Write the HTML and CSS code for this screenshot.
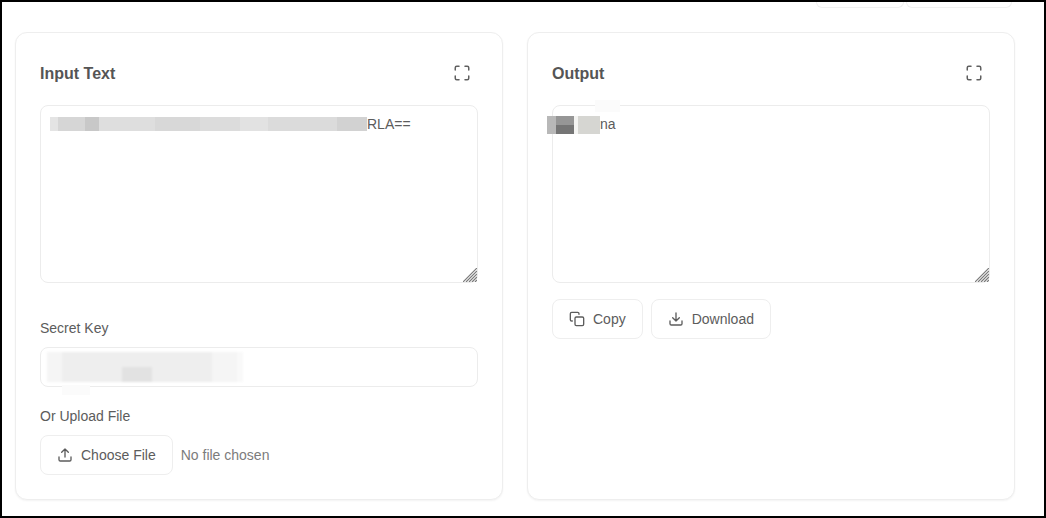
FILE: index.html
```html
<!DOCTYPE html>
<html>
<head>
<title>Decrypt Text</title>
<link rel="stylesheet" href="styles.css">
</head>
<body>
<div class="frame">
<div class="toolbar">
<div class="tool-btn tool-a"></div>
<div class="tool-btn tool-b"></div>
</div>
<div class="content">
<div class="card">
<div class="card-head">
<h3>Input Text</h3>
<svg class="icon-max" viewBox="0 0 24 24"><path d="M8 3H5a2 2 0 0 0-2 2v3M21 8V5a2 2 0 0 0-2-2h-3M3 16v3a2 2 0 0 0 2 2h3M16 21h3a2 2 0 0 0 2-2v-3"/></svg>
</div>
<div class="text-wrap">
<textarea class="text-box indent-input" spellcheck="false">RLA==</textarea>
<div class="redact redact-input"></div>
<svg class="grip" viewBox="0 0 14 14"><path d="M0 14 14 0M3 14 14 3M6 14 14 6M9 14 14 9M12 14 14 12"/></svg>
</div>
<label class="field-label label-key">Secret Key</label>
<div class="key-wrap">
<input type="text" class="key-input">
<div class="redact redact-key"></div>
<div class="smudge smudge-key"></div>
</div>
<label class="field-label label-file">Or Upload File</label>
<div class="file-row">
<button class="btn">
<svg class="icon" viewBox="0 0 24 24"><path d="M21 15v4a2 2 0 0 1-2 2H5a2 2 0 0 1-2-2v-4M17 8l-5-5-5 5M12 3v12"/></svg>
Choose File
</button>
<span class="file-name">No file chosen</span>
</div>
</div>
<div class="card">
<div class="card-head">
<h3>Output</h3>
<svg class="icon-max" viewBox="0 0 24 24"><path d="M8 3H5a2 2 0 0 0-2 2v3M21 8V5a2 2 0 0 0-2-2h-3M3 16v3a2 2 0 0 0 2 2h3M16 21h3a2 2 0 0 0 2-2v-3"/></svg>
</div>
<div class="text-wrap">
<textarea class="text-box indent-output" spellcheck="false">na</textarea>
<div class="smudge smudge-output"></div>
<div class="redact redact-output"></div>
<svg class="grip" viewBox="0 0 14 14"><path d="M0 14 14 0M3 14 14 3M6 14 14 6M9 14 14 9M12 14 14 12"/></svg>
</div>
<div class="actions">
<button class="btn">
<svg class="icon" viewBox="0 0 24 24"><rect x="9" y="9" width="13" height="13" rx="2"/><path d="M5 15H4a2 2 0 0 1-2-2V4a2 2 0 0 1 2-2h9a2 2 0 0 1 2 2v1"/></svg>
Copy
</button>
<button class="btn">
<svg class="icon" viewBox="0 0 24 24"><path d="M21 15v4a2 2 0 0 1-2 2H5a2 2 0 0 1-2-2v-4M7 10l5 5 5-5M12 15V3"/></svg>
Download
</button>
</div>
</div>
</div>
</div>
</body>
</html>
```

FILE: styles.css
```css
html,body{margin:0;height:100%;overflow:hidden;background:#fff}
body{font-family:"Liberation Sans",Arial,sans-serif;color:#5c5c5c;font-size:14px}
.frame{box-sizing:border-box;height:518px;border:2px solid #000;padding:0 29px 0 13px;overflow:hidden}
.toolbar{display:flex;justify-content:flex-end;gap:2px;height:6px;margin-bottom:24px;padding-right:3px}
.tool-btn{box-sizing:border-box;height:6px;border:1px solid #f0f0f0;border-top:none;border-radius:0 0 6px 6px}
.tool-a{width:88px}
.tool-b{width:106px}
.content{display:grid;grid-template-columns:488px 488px;gap:24px}
.card{box-sizing:border-box;height:468px;padding:24px;border:1px solid #eeeeee;border-radius:12px;background:#fff;box-shadow:0 1px 2px rgba(0,0,0,.05)}
.card-head{display:flex;justify-content:space-between;align-items:center;height:32px;margin-bottom:16px;padding-right:7px}
.card-head h3{margin:2px 0 0;font-size:16px;line-height:24px;font-weight:bold;color:#555}
.icon-max{width:18px;height:18px;fill:none;stroke:#606060;stroke-width:2;stroke-linecap:round;stroke-linejoin:round}
.text-wrap{position:relative;height:178px}
.text-box{display:block;box-sizing:border-box;width:100%;height:178px;padding:8px 10px;border:1px solid #ececec;border-radius:8px;resize:none;outline:none;font-family:inherit;font-size:14px;line-height:20px;color:#5c5c5c;background:#fff}
.indent-input{text-indent:316px}
.indent-output{text-indent:37px}
.grip{position:absolute;right:1px;bottom:1px;width:14px;height:14px;fill:none;stroke:#7a7a7a;stroke-width:1.2}
.redact{position:absolute;pointer-events:none}
.redact-input{left:10px;top:12px;width:317px;height:14px;filter:blur(.5px);background:
linear-gradient(90deg,#e4e4e4 0 8px,#d6d6d6 8px 35px,#c8c8c8 35px 49px,#dedede 49px 105px,#d8d8d8 105px 150px,#dcdcdc 150px 190px,#e2e2e2 190px 218px,#dbdbdb 218px 287px,#d2d2d2 287px 317px)}
.redact-output{left:-5px;top:11px;width:53px;height:18px;background:
linear-gradient(#969696 0 9px,#757575 9px 18px) 9px 0/18px 18px no-repeat,
linear-gradient(90deg,#b8b8b8 0 27px,#f4f4f2 27px 31px,#d6d6d2 31px 53px)}
.smudge{position:absolute;background:#fbfbfb}
.smudge-output{left:43px;top:-5px;width:25px;height:12px}
.field-label{display:block;line-height:20px;margin-bottom:9px;color:#5c5c5c}
.label-key{margin-top:35px}
.label-file{margin-top:19px}
.key-wrap{position:relative;height:40px}
.key-input{display:block;box-sizing:border-box;width:100%;height:40px;padding:0 10px;border:1px solid #ececec;border-radius:8px;outline:none;background:#fff}
.redact-key{left:7px;top:5px;width:196px;height:30px;filter:blur(.8px);background:
linear-gradient(#e2e2e2,#e2e2e2) 75px 15px/30px 15px no-repeat,
linear-gradient(90deg,#f5f5f5 0 15px,#eeeeee 15px 165px,#f5f5f5 165px 190px,#f9f9f9 190px 196px)}
.smudge-key{left:22px;top:38px;width:28px;height:10px}
.file-row{display:flex;align-items:center;gap:8px}
.actions{display:flex;gap:8px;margin-top:16px}
.btn{display:flex;align-items:center;gap:8px;box-sizing:border-box;height:40px;padding:0 16px;border:1px solid #eeeeee;border-radius:8px;background:#fff;font-family:inherit;font-size:14px;color:#5c5c5c;cursor:pointer}
.icon{width:16px;height:16px;fill:none;stroke:#5c5c5c;stroke-width:2;stroke-linecap:round;stroke-linejoin:round}
.file-name{color:#7c7c7c}
```
